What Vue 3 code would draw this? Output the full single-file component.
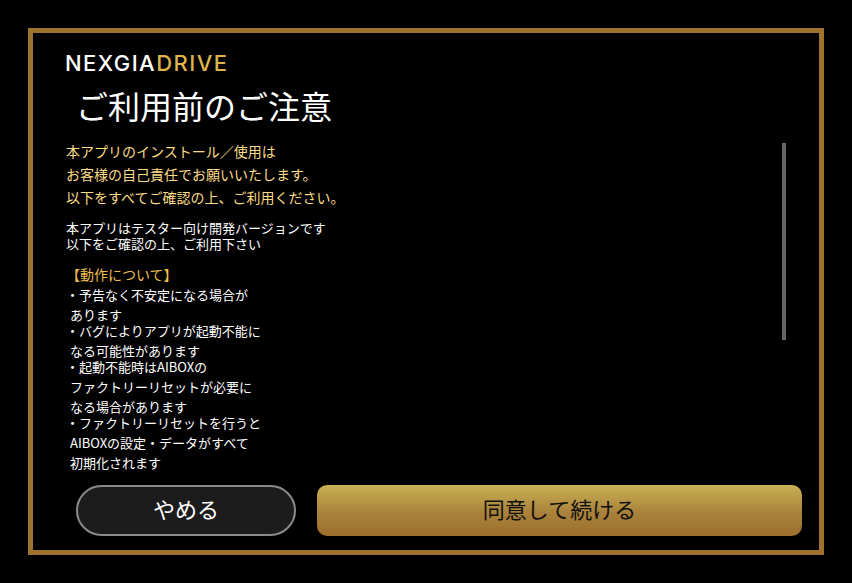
<script setup>
const intro = ['本アプリのインストール／使用は', 'お客様の自己責任でお願いいたします。', '以下をすべてご確認の上、ご利用ください。']
const notes = ['本アプリはテスター向け開発バージョンです', '以下をご確認の上、ご利用下さい']
const items = [
  ['・予告なく不安定になる場合が', 'あります'],
  ['・バグによりアプリが起動不能に', 'なる可能性があります'],
  ['・起動不能時はAIBOXの', 'ファクトリーリセットが必要に', 'なる場合があります'],
  ['・ファクトリーリセットを行うと', 'AIBOXの設定・データがすべて', '初期化されます'],
]
</script>

<template>
  <main class="page">
    <section class="frame">
      <header class="head">
        <div class="logo"><span>NEXGIA</span><span class="logo-gold">DRIVE</span></div>
        <h1 class="title">ご利用前のご注意</h1>
      </header>
      <div class="body">
        <div class="scrollbar"></div>
        <p v-for="line in intro" :key="line" class="intro">{{ line }}</p>
        <div class="notes">
          <p v-for="line in notes" :key="line">{{ line }}</p>
        </div>
        <h2 class="section">【動作について】</h2>
        <ul class="list">
          <li v-for="item in items" :key="item[0]">
            <p v-for="line in item" :key="line">{{ line }}</p>
          </li>
        </ul>
      </div>
      <footer class="actions">
        <button class="btn cancel">やめる</button>
        <button class="btn agree">同意して続ける</button>
      </footer>
    </section>
  </main>
</template>

<style>
html, body { margin: 0; background: #000; }
</style>

<style scoped>
.page {
  box-sizing: border-box;
  width: 852px;
  height: 583px;
  padding: 28px;
  background: #000;
  font-family: "Noto Sans CJK JP", "Noto Sans", sans-serif;
}
.frame {
  box-sizing: border-box;
  width: 796px;
  height: 527px;
  border: 5px solid #9e722c;
  display: flex;
  flex-direction: column;
}
.head { padding: 21px 0 0 32px; }
.logo {
  height: 18px;
  font-family: Inter, sans-serif;
  font-size: 22px;
  line-height: 18px;
  letter-spacing: 1.45px;
  font-weight: 500;
  color: #fff;
  white-space: nowrap;
}
.logo-gold { color: #dfb44e; }
.title {
  margin: 10px 0 0 11px;
  font-size: 32px;
  line-height: 46px;
  font-weight: 400;
  color: #fff;
}
.body {
  position: relative;
  flex: 1;
  min-height: 0;
  padding: 12px 0 0 33px;
  overflow: hidden;
}
p { margin: 0; }
.scrollbar {
  position: absolute;
  left: 749px;
  top: 15px;
  width: 4px;
  height: 197px;
  background: #66666b;
}
.intro {
  font-size: 14px;
  line-height: 23px;
  color: #fbdc86;
}
.notes {
  margin-top: 11px;
  font-size: 13px;
  line-height: 16px;
  color: #fff;
}
.section {
  margin: 10px 0 0;
  font-size: 14px;
  line-height: 24px;
  font-weight: 400;
  color: #efbd4e;
}
.list {
  margin: 1px 0 0;
  padding: 0 0 0 4px;
  list-style: none;
  font-size: 13px;
  line-height: 16px;
  color: #fff;
}
.list li p + p { padding-top: 4px; }
.list li p:first-child { margin-left: -4px; }
.actions {
  display: flex;
  gap: 21px;
  padding: 0 17px 14px 43px;
}
.btn {
  box-sizing: border-box;
  height: 51px;
  font-family: inherit;
  font-size: 22px;
  padding: 0 0 5px;
}
.cancel {
  width: 220px;
  border: 2px solid #8a8a8a;
  border-radius: 26px;
  background: #1c1c1c;
  color: #fff;
}
.agree {
  flex: 1;
  border: 0;
  border-radius: 10px;
  background: linear-gradient(#c9b155, #a9813a 55%, #9c702c);
  color: #111;
}
</style>
